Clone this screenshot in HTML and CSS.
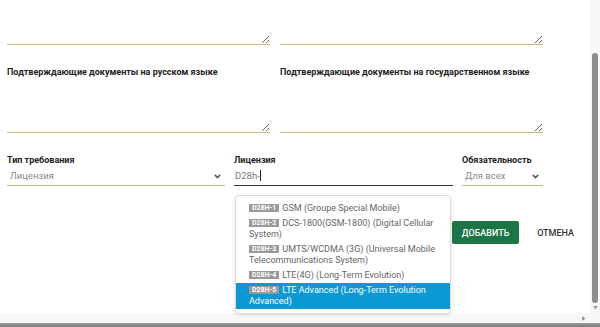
FILE: index.html
```html
<!DOCTYPE html>
<html lang="ru">
<head>
  <meta charset="UTF-8">
  <title>Требования</title>
  <link rel="stylesheet" href="styles.css">
</head>
<body>
  <div class="screen">
    <div class="viewport">
      <main class="form">
        <!-- Описание (верх обрезан) -->
        <div class="row two">
          <textarea class="area area-top"></textarea>
          <textarea class="area area-top"></textarea>
        </div>

        <!-- Подтверждающие документы -->
        <div class="row two">
          <div class="field">
            <label>Подтверждающие документы на русском языке</label>
            <textarea class="area"></textarea>
          </div>
          <div class="field">
            <label>Подтверждающие документы на государственном языке</label>
            <textarea class="area"></textarea>
          </div>
        </div>

        <div class="row three">
          <div class="field">
            <label>Тип требования</label>
            <div class="select">
              <span>Лицензия</span>
              <svg class="chevron" width="7" height="5" viewBox="0 0 7 5"><path d="M0.8 0.9 L3.5 3.6 L6.2 0.9" fill="none" stroke="#555" stroke-width="1.5"/></svg>
            </div>
          </div>
          <div class="field license">
            <label>Лицензия</label>
            <div class="input">D28h-<span class="caret"></span></div>

            <!-- Подсказки -->
            <ul class="dropdown">
              <li><span class="badge">D28H-1</span>GSM (Groupe Special Mobile)</li>
              <li><span class="badge">D28H-2</span>DCS-1800(GSM-1800) (Digital Cellular System)</li>
              <li><span class="badge">D28H-3</span>UMTS/WCDMA (3G) (Universal Mobile Telecommunications System)</li>
              <li><span class="badge">D28H-4</span>LTE(4G) (Long-Term Evolution)</li>
              <li class="active"><span class="badge">D28H-5</span>LTE Advanced (Long-Term Evolution Advanced)</li>
            </ul>
          </div>
          <div class="field">
            <label>Обязательность</label>
            <div class="select">
              <span>Для всех</span>
              <svg class="chevron" width="7" height="5" viewBox="0 0 7 5"><path d="M0.8 0.9 L3.5 3.6 L6.2 0.9" fill="none" stroke="#555" stroke-width="1.5"/></svg>
            </div>
          </div>
        </div>

        <div class="actions">
          <button class="btn-add">ДОБАВИТЬ</button>
          <button class="btn-cancel">ОТМЕНА</button>
        </div>
      </main>

      <div class="vscroll">
        <div class="thumb"></div>
        <svg class="arrow" width="5" height="4" viewBox="0 0 5 4"><path d="M0 0 H5 L2.5 3.5 Z" fill="#9a9a9a"/></svg>
      </div>
    </div>

    <div class="hscroll">
      <div class="htrack">
        <svg class="arrow" width="4" height="5" viewBox="0 0 4 5"><path d="M0 0 V5 L3.5 2.5 Z" fill="#9a9a9a"/></svg>
      </div>
      <div class="hthumb"></div>
    </div>
  </div>
</body>
</html>
```

FILE: styles.css
```css
body {
  font-family: Roboto, "Liberation Sans", sans-serif;
  margin: 0;
  padding: 0;
  background-color: white;
  overflow: hidden;
}

.screen {
  width: 600px;
  height: 327px;
  display: flex;
  flex-direction: column;
}

.viewport {
  height: 313px;
  display: flex;
}

/* Form */
.form {
  width: 583px;
  padding-left: 7px;
}

.row {
  display: grid;
}

.row.two {
  grid-template-columns: 263px 263px;
  column-gap: 10px;
}

.row.three {
  grid-template-columns: 218px 219px 81px;
  column-gap: 9px;
  margin-top: 21px;
}

.field {
  display: flex;
  flex-direction: column;
}

.row.two .field {
  margin-top: 21px;
}

label {
  font-size: 9px;
  font-weight: 700;
  line-height: 12px;
  color: #222;
}

.area {
  display: block;
  box-sizing: border-box;
  width: 100%;
  height: 55px;
  border: none;
  border-bottom: 1px solid #cdb87f;
  padding: 0;
  margin: 0;
  outline: none;
  font-family: inherit;
}

.area-top {
  height: 45px;
}

.select {
  display: flex;
  justify-content: space-between;
  align-items: center;
  height: 19px;
  padding: 0 3px;
  border-bottom: 1px solid #cdb87f;
  font-size: 9.5px;
  color: #8a8a8a;
}

.chevron {
  margin-right: 1px;
  margin-top: 1px;
}

.license {
  position: relative;
}

.input {
  display: flex;
  align-items: center;
  height: 19px;
  padding-left: 1px;
  border-bottom: 1.5px solid #333;
  font-size: 9.5px;
  color: #777;
}

.caret {
  display: inline-block;
  width: 1px;
  height: 11px;
  background-color: #222;
}

/* Autocomplete list */
.dropdown {
  position: absolute;
  top: 100%;
  left: 1px;
  width: 216px;
  box-sizing: border-box;
  margin: 9px 0 0;
  padding: 5px 0 4px;
  list-style: none;
  background-color: white;
  border: 1px solid #ddd;
  border-radius: 4px;
  box-shadow: 0 1px 4px rgba(0, 0, 0, 0.12);
  z-index: 2;
}

.dropdown li {
  padding: 2px 6px 2px 13px;
  font-size: 9px;
  line-height: 11px;
  color: #666;
}

.dropdown li.active {
  background-color: #0a99d3;
  color: white;
}

.badge {
  display: inline-block;
  background-color: #9a9a9a;
  color: white;
  font-size: 7px;
  font-weight: 700;
  line-height: 8px;
  padding: 0 3px;
  margin-right: 3px;
  vertical-align: 1px;
}

/* Buttons */
.actions {
  display: flex;
  justify-content: flex-end;
  align-items: center;
  margin-top: 35px;
  padding-right: 6px;
}

button {
  font-family: inherit;
  font-size: 9px;
  font-weight: 500;
  border: none;
  cursor: pointer;
}

.btn-add {
  height: 23px;
  width: 67px;
  padding: 0;
  background-color: #1c7546;
  color: white;
  border-radius: 2px;
}

.btn-cancel {
  height: 23px;
  margin-left: 8px;
  padding: 0 10px;
  background: none;
  color: #333;
}

/* Fake scrollbars */
.vscroll {
  position: relative;
  width: 10px;
  background-color: #f7f7f7;
}

.vscroll .thumb {
  position: absolute;
  left: 2px;
  top: 53px;
  width: 6px;
  height: 250px;
  background-color: #8c8c8c;
  border-radius: 3px;
}

.vscroll .arrow {
  position: absolute;
  left: 3px;
  top: 306px;
}

.hscroll {
  height: 14px;
  display: flex;
  flex-direction: column;
}

.htrack {
  height: 10px;
  background-color: #f8f8f8;
  display: flex;
  justify-content: flex-end;
  align-items: center;
  padding-right: 14px;
}

.hthumb {
  height: 4px;
  background: linear-gradient(#9a9a9a, #7d7d7d);
}
```
